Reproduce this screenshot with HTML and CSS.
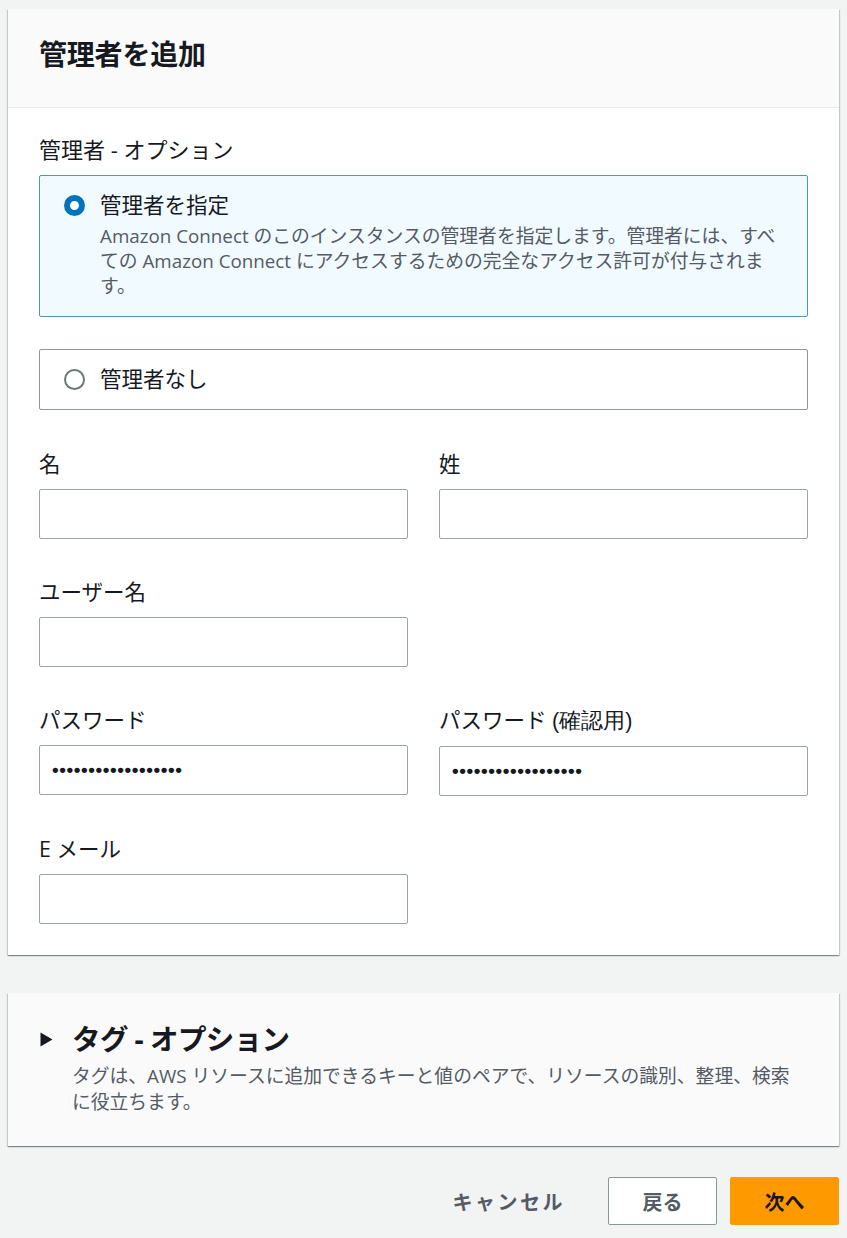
FILE: index.html
```html
<!DOCTYPE html>
<html lang="ja">
<head>
<meta charset="utf-8">
<title>管理者を追加</title>
<link rel="stylesheet" href="styles.css">
</head>
<body>
<div class="page">
  <section class="card">
    <header class="card-header">
      <h2 class="card-title">管理者を追加</h2>
    </header>
    <div class="card-body">
      <div class="group-label">管理者 - オプション</div>
      <div class="tile tile-selected">
        <div class="tile-row">
          <span class="radio radio-on"></span>
          <span class="tile-title">管理者を指定</span>
        </div>
        <p class="tile-desc">Amazon Connect のこのインスタンスの管理者を指定します。管理者には、すべ<br>ての Amazon Connect にアクセスするための完全なアクセス許可が付与されま<br>す。</p>
      </div>
      <div class="tile">
        <div class="tile-row">
          <span class="radio"></span>
          <span class="tile-title">管理者なし</span>
        </div>
      </div>

      <div class="fields">
        <div class="field">
          <label class="field-label">名</label>
          <div class="input"></div>
        </div>
        <div class="field">
          <label class="field-label">姓</label>
          <div class="input"></div>
        </div>
        <div class="field">
          <label class="field-label">ユーザー名</label>
          <div class="input"></div>
        </div>
        <div class="field empty"></div>
        <div class="field">
          <label class="field-label">パスワード</label>
          <div class="input dots">••••••••••••••••••</div>
        </div>
        <div class="field">
          <label class="field-label">パスワード <span class="paren">(確認用)</span></label>
          <div class="input dots">••••••••••••••••••</div>
        </div>
        <div class="field">
          <label class="field-label">E メール</label>
          <div class="input"></div>
        </div>
      </div>
    </div>
  </section>

  <section class="card card-tags">
    <div class="tags-head">
      <svg class="caret" width="13" height="15" viewBox="0 0 13 15"><polygon points="0.5,0.5 12.5,7.5 0.5,14.5" fill="#16191f"/></svg>
      <h2 class="tags-title">タグ - オプション</h2>
    </div>
    <p class="tags-desc">タグは、AWS リソースに追加できるキーと値のペアで、リソースの識別、整理、検索<br>に役立ちます。</p>
  </section>

  <div class="actions">
    <button class="btn btn-link">キャンセル</button>
    <button class="btn btn-normal">戻る</button>
    <button class="btn btn-primary">次へ</button>
  </div>
</div>
</body>
</html>
```

FILE: styles.css
```css
* { box-sizing: border-box; }

html, body {
  margin: 0;
  padding: 0;
  background: #f2f3f3;
}

body {
  font-family: "Open Sans", "Noto Sans CJK JP", sans-serif;
  color: #16191f;
}

.page {
  padding: 9px 8px 0 8px;
}

.card {
  background: #ffffff;
  box-shadow: 0 1px 1px 0 rgba(0, 28, 36, 0.3), 1px 1px 1px 0 rgba(0, 28, 36, 0.15), -1px 1px 1px 0 rgba(0, 28, 36, 0.15);
}

.card-header {
  background: #fafafa;
  border-bottom: 1px solid #eaeded;
  height: 99px;
  padding: 0 31px;
  display: flex;
  align-items: center;
}

.card-title {
  margin: 0 0 8px 0;
  font-size: 28px;
  font-weight: 700;
  line-height: 34px;
  letter-spacing: -0.2px;
}

.card-body {
  padding: 27px 31px 31px 31px;
}

.group-label {
  font-size: 22px;
  line-height: 28px;
  margin-bottom: 12px;
  color: #16191f;
}

.tile {
  border: 1px solid #8c9899;
  border-radius: 2px;
  background: #ffffff;
  padding: 14px 24px 15px 24px;
  margin-bottom: 32px;
}

.tile-selected {
  background: #f1faff;
  border-color: #4d94cc;
  padding-bottom: 17px;
}

.tile-row {
  display: flex;
  align-items: center;
  gap: 15px;
  height: 30px;
}

.radio {
  width: 21px;
  height: 21px;
  border-radius: 50%;
  border: 2px solid #6c7778;
  background: #ffffff;
  flex: none;
}

.radio-on {
  border: 6px solid #0073bb;
}

.tile-title {
  font-size: 21.5px;
  line-height: 30px;
}

.tile-desc {
  margin: 4px 0 0 36px;
  font-size: 18.8px;
  line-height: 25px;
  color: #545b64;
  white-space: nowrap;
}

.fields {
  display: grid;
  grid-template-columns: 1fr 1fr;
  column-gap: 31px;
  row-gap: 39px;
  margin-top: 40px;
}

.field-label {
  display: block;
  font-size: 21.5px;
  line-height: 28px;
  margin-bottom: 11px;
}

.paren {
  font-family: "Liberation Sans", sans-serif;
}

.input {
  height: 50px;
  border: 1px solid #9aa5a6;
  border-radius: 2px;
  background: #ffffff;
}

.dots {
  padding-left: 12px;
  font-family: "Liberation Sans", sans-serif;
  font-size: 19px;
  font-weight: 700;
  line-height: 48px;
  letter-spacing: 0.6px;
  color: #16191f;
}

.card-tags {
  margin-top: 38px;
  background: #fafafa;
  padding: 29px 31px 31px 31px;
}

.tags-head {
  display: flex;
  align-items: center;
  gap: 19px;
}

.caret {
  margin-left: 1px;
  flex: none;
}

.tags-title {
  margin: 0;
  font-size: 28.5px;
  font-weight: 700;
  line-height: 34px;
  letter-spacing: -0.6px;
}

.tags-desc {
  margin: 7px 0 0 33px;
  font-size: 18.8px;
  line-height: 26px;
  color: #545b64;
  white-space: nowrap;
}

.actions {
  display: flex;
  justify-content: flex-end;
  align-items: center;
  margin-top: 31px;
}

.btn {
  font-family: "Open Sans", "Noto Sans CJK JP", sans-serif;
  font-size: 20px;
  font-weight: 700;
  height: 48px;
  width: 109px;
  border-radius: 2px;
  cursor: pointer;
  padding: 0;
}

.btn-link {
  background: transparent;
  border: none;
  color: #545b64;
  width: auto;
  letter-spacing: 2.5px;
  margin-right: 43px;
}

.btn-normal {
  background: #ffffff;
  border: 1px solid #879596;
  color: #545b64;
  margin-right: 13px;
}

.btn-primary {
  background: #ff9900;
  border: 1px solid #ff9900;
  color: #16191f;
}
```
